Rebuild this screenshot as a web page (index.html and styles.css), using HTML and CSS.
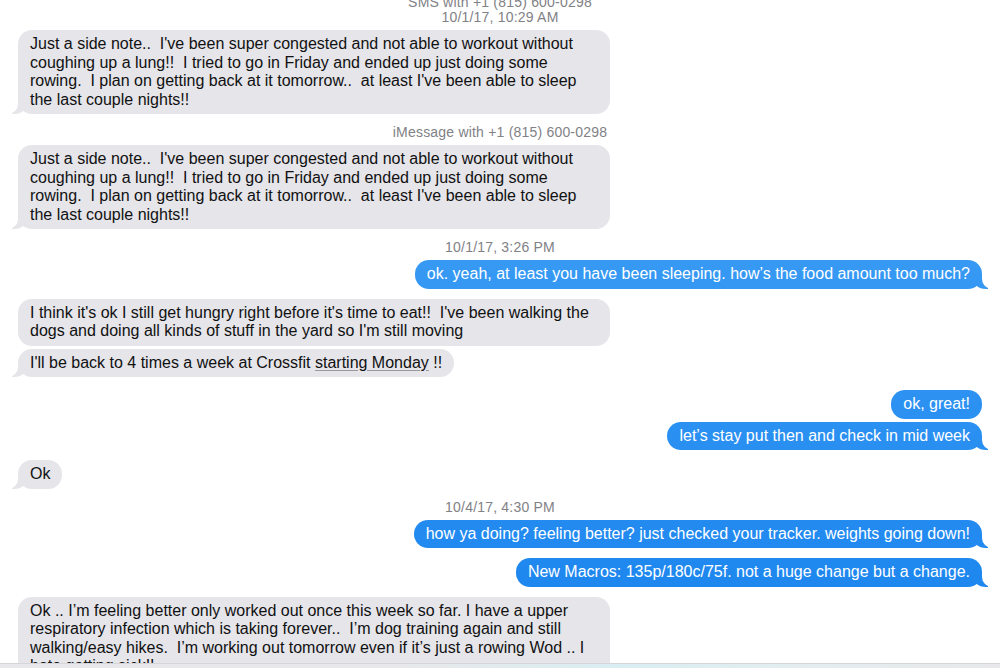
FILE: index.html
```html
<!DOCTYPE html>
<html lang="en">
<head>
  <meta charset="UTF-8">
  <title>Messages</title>
  <link rel="stylesheet" href="styles.css">
</head>
<body>
  <div class="window">
    <div class="thread">
      <p class="label label-top">SMS with +1 (815) 600-0298</p>
      <p class="label">10/1/17, 10:29 AM</p>
      <div class="row them">
        <div class="bubble tail">Just a side note..  I've been super congested and not able to workout without coughing up a lung!!  I tried to go in Friday and ended up just doing some rowing.  I plan on getting back at it tomorrow..  at least I've been able to sleep the last couple nights!!</div>
      </div>

      <p class="label label-gap">iMessage with +1 (815) 600-0298</p>
      <div class="row them">
        <div class="bubble tail">Just a side note..  I've been super congested and not able to workout without coughing up a lung!!  I tried to go in Friday and ended up just doing some rowing.  I plan on getting back at it tomorrow..  at least I've been able to sleep the last couple nights!!</div>
      </div>

      <p class="label label-gap">10/1/17, 3:26 PM</p>
      <div class="row me">
        <div class="bubble tail">ok. yeah, at least you have been sleeping. how’s the food amount too much?</div>
      </div>

      <div class="row them first">
        <div class="bubble">I think it's ok I still get hungry right before it's time to eat!!  I've been walking the dogs and doing all kinds of stuff in the yard so I'm still moving</div>
      </div>
      <div class="row them">
        <div class="bubble tail">I'll be back to 4 times a week at Crossfit <span class="detected">starting Monday</span> !!</div>
      </div>

      <div class="row me first wide-gap">
        <div class="bubble">ok, great!</div>
      </div>
      <div class="row me">
        <div class="bubble tail">let’s stay put then and check in mid week</div>
      </div>

      <div class="row them first">
        <div class="bubble tail">Ok</div>
      </div>

      <p class="label label-gap">10/4/17, 4:30 PM</p>
      <div class="row me">
        <div class="bubble tail">how ya doing? feeling better? just checked your tracker. weights going down!</div>
      </div>
      <div class="row me first">
        <div class="bubble tail">New Macros: 135p/180c/75f. not a huge change but a change.</div>
      </div>

      <div class="row them first">
        <div class="bubble tail">Ok .. I’m feeling better only worked out once this week so far. I have a upper respiratory infection which is taking forever..  I’m dog training again and still walking/easy hikes.  I’m working out tomorrow even if it’s just a rowing Wod .. I hate getting sick!!</div>
      </div>
    </div>
    <div class="bottom-bar"></div>
  </div>
</body>
</html>
```

FILE: styles.css
```css
* {
  box-sizing: border-box;
  margin: 0;
  padding: 0;
}

body {
  font-family: 'Liberation Sans', Arial, sans-serif;
  background: #fff;
  overflow: hidden;
}

.window {
  height: 668px;
  display: flex;
  flex-direction: column;
}

.thread {
  flex: 1;
  overflow: hidden;
  padding: 0 18px;
  display: flex;
  flex-direction: column;
}

.bottom-bar {
  height: 5px;
  border-top: 1px solid #d6d6d8;
  background: linear-gradient(to right, #e8e8ea 0%, #e8e8ea 40%, #d9eef3 62%, #e3edf0 80%, #e8e8ea 100%);
}

/* labels + timestamps */
.label {
  text-align: center;
  font-size: 14px;
  line-height: 15px;
  letter-spacing: 0.2px;
  color: #818186;
  margin-bottom: 2px;
}

.label-top {
  margin-top: -5px;
  margin-bottom: 0;
}

.label-gap {
  margin-top: 11px;
}

/* messages */
.row {
  display: flex;
  margin-top: 3px;
}

.row.first {
  margin-top: 10px;
}

.row.wide-gap {
  margin-top: 13px;
}

.row.them {
  justify-content: flex-start;
}

.row.me {
  justify-content: flex-end;
}

.bubble {
  position: relative;
  max-width: 592px;
  padding: 5px 12px;
  border-radius: 14px;
  font-size: 16px;
  line-height: 18.5px;
  white-space: pre-wrap;
}

.them .bubble {
  background: #e5e5ea;
  color: #111;
}

.me .bubble {
  background: linear-gradient(to bottom, #4aa7f7 0%, #1883ee 100%) fixed;
  color: #fff;
}

.detected {
  text-decoration: underline;
  text-decoration-color: #9a9a9e;
  text-underline-offset: 2px;
}

/* bubble tails */
.bubble.tail::before,
.bubble.tail::after {
  content: "";
  position: absolute;
  bottom: 0;
  height: 14px;
}

.them .bubble.tail::before {
  left: -6px;
  width: 16px;
  background: #e5e5ea;
  border-bottom-right-radius: 14px 12px;
}

.them .bubble.tail::after {
  left: -10px;
  width: 10px;
  background: #fff;
  border-bottom-right-radius: 10px;
}

.me .bubble.tail::before {
  right: -6px;
  width: 16px;
  background: linear-gradient(to bottom, #4aa7f7 0%, #1883ee 100%) fixed;
  border-bottom-left-radius: 14px 12px;
}

.me .bubble.tail::after {
  right: -10px;
  width: 10px;
  background: #fff;
  border-bottom-left-radius: 10px;
}
```
